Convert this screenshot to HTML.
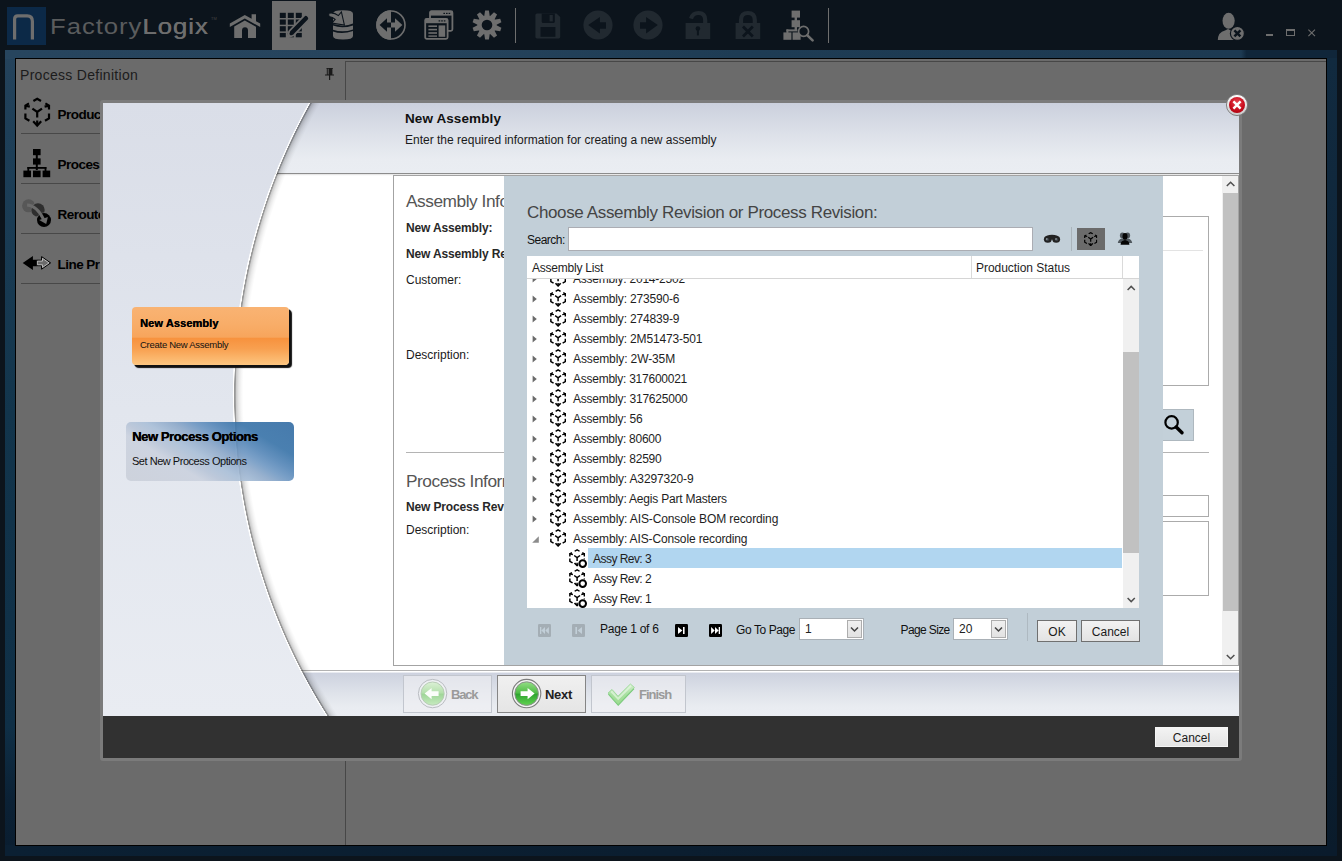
<!DOCTYPE html>
<html>
<head>
<meta charset="utf-8">
<title>FactoryLogix</title>
<style>
*{box-sizing:border-box;margin:0;padding:0}
html,body{width:1342px;height:861px;overflow:hidden;background:#0c141c;font-family:"Liberation Sans",sans-serif;font-size:12px;color:#222}
.abs{position:absolute}
#app{position:absolute;left:0;top:0;width:1342px;height:861px;background:#0c141c;overflow:hidden}
#band{left:5px;top:50px;width:1332px;height:806px;background:linear-gradient(180deg,#25435c 0%,#1e3f58 10%,#12354c 45%,#0f2f46 84%,#0b2135 93%,#0a1d2f 100%)}
#main{left:15px;top:58px;width:1312px;height:788px;background:#6b6b6b;border:1px solid #000}
#vdiv{left:345px;top:61px;width:981px;height:784px;border-left:1px solid #474747;border-top:1px solid #474747}
.pitem{position:absolute;left:21px;width:90px;height:50px;border-bottom:1px solid #484848;font-weight:700;font-size:13.5px;color:#000;white-space:nowrap;overflow:hidden}
.pitem span{position:absolute;left:36.6px;top:23px;line-height:16px;letter-spacing:-0.55px}
.pitem svg{position:absolute;left:1px}
/* dialog */
#dlgshadow{left:100px;top:100px;width:1142px;height:661px;background:#7b7b7b;border-radius:3px}
#dlg{left:103px;top:103px;width:1136px;height:655px;background:#fff;overflow:hidden}
#dlgfoot{left:0;top:613px;width:1136px;height:42px;background:#313131}
.btn{position:absolute;border:1px solid #707070;background:linear-gradient(180deg,#f2f2f2,#e3e3e3);text-align:center;color:#1a1a1a;font-size:12px}
.row{position:absolute;white-space:nowrap;font-size:12px;line-height:16px;color:#1e1e1e;letter-spacing:-0.22px}
</style>
</head>
<body>
<div id="app">
<!--TOPBAR-->
<div class="abs" style="left:7px;top:7px;width:39px;height:38px;background:#0c2947"></div>
<svg class="abs" style="left:7px;top:7px" width="39" height="38" viewBox="0 0 39 38"><path d="M7.6 32.4 V12 Q7.6 8.8 10.8 8.8 H20.2 Q25.4 8.8 25.4 14.2 V32.4" fill="none" stroke="#6e6e6e" stroke-width="3.2"/></svg>
<div class="abs" style="left:50px;top:12px;font-size:21.4px;line-height:30px;color:#6e6e6e;white-space:nowrap;transform-origin:0 0;transform:scaleX(1.2);letter-spacing:0.8px"><span style="opacity:.8">Factory</span><span style="text-shadow:0.4px 0 0 #6e6e6e">Logix</span></div>
<div class="abs" style="left:211px;top:16px;font-size:4px;color:#444;letter-spacing:0">TM</div>
<!-- home -->
<svg class="abs" style="left:228px;top:10px" width="36" height="32" viewBox="0 0 36 32"><g fill="#6e6e6e"><path d="M1.8 13.4 L16.8 5 L23.6 8.8 V4.2 H28 V11.2 L32.2 13.6 V17 L16.8 8.6 L1.8 17 Z"/><path d="M6.2 16.6 L16.8 10.6 L28 16.8 V27.9 H20 V20.6 Q20 17.2 17 17.2 Q14 17.2 14 20.6 V27.9 H6.2 Z"/></g></svg>
<!-- selected tab -->
<div class="abs" style="left:272px;top:1px;width:44px;height:49px;background:#6d6d6d"></div>
<svg class="abs" style="left:272px;top:1px" width="44" height="49" viewBox="0 0 44 49"><g fill="#0c141c">
<rect x="7.8" y="11.8" width="6" height="5.2"/><rect x="15.8" y="11.8" width="6" height="5.2"/><rect x="23.8" y="11.8" width="6" height="5.2"/>
<rect x="7.8" y="18.5" width="6" height="5.2"/><rect x="15.8" y="18.5" width="6" height="5.2"/><rect x="23.8" y="18.5" width="6" height="5.2"/>
<rect x="7.8" y="25.2" width="6" height="5.2"/><rect x="15.8" y="25.2" width="6" height="5.2"/><rect x="23.8" y="25.2" width="6" height="5.2"/>
<rect x="7.8" y="31.9" width="6" height="4.4"/><rect x="15.8" y="31.9" width="6" height="4.4"/><rect x="23.8" y="31.9" width="6" height="4.4"/></g>
<path d="M32 14.8 Q33.8 13 36 15.2 Q38.2 17.4 36.4 19.2 L21.8 34.2 L15.4 36.6 L17.4 30 Z" fill="#0c141c" stroke="#6d6d6d" stroke-width="1.7"/><path d="M15.6 36.4 L17 32.8 L19.2 35 Z" fill="#6d6d6d"/></svg>
<!-- db -->
<svg class="abs" style="left:326px;top:8px" width="30" height="34" viewBox="0 0 30 34"><g fill="#6e6e6e"><path d="M7 5.6 Q7 2.2 17 2.2 Q27 2.2 27 5.6 V15.6 Q22 18 15 17.6 L7 16 Z"/><path d="M7 17.6 Q16 21 27 17.4 V21.4 Q17 25 7 21.8 Z"/><path d="M7 23.4 Q16 26.6 27 23 V28 Q27 31.6 17 31.6 Q7 31.6 7 28 Z"/><path d="M2.6 5.2 Q8 4 12.4 7.6 L15.4 4 L18.4 17 L5.8 15 L9.2 11.4 Q6.6 9 3 8.6 Z" stroke="#0c141c" stroke-width="1.1"/></g></svg>
<!-- circle arrows -->
<svg class="abs" style="left:375px;top:9px" width="32" height="32" viewBox="0 0 32 32"><circle cx="16" cy="16" r="14" fill="#0c141c" stroke="#6e6e6e" stroke-width="1.6"/><path d="M16 1.2 A14.8 14.8 0 0 0 16 30.8 Z" fill="#6e6e6e"/><path d="M4.6 16 L12 9.2 V13.4 H16 V18.6 H12 V22.8 Z" fill="#0c141c"/><path d="M27.4 16 L20 9.2 V13.4 H16 V18.6 H20 V22.8 Z" fill="#6e6e6e"/></svg>
<!-- windows -->
<svg class="abs" style="left:423px;top:9px" width="32" height="32" viewBox="0 0 32 32"><g fill="none" stroke="#6e6e6e" stroke-width="1.8"><rect x="7" y="2.2" width="22.4" height="19.6" rx="1.5"/><rect x="2.2" y="9.8" width="22.4" height="20" rx="1.5" fill="#0c141c"/></g><g fill="#6e6e6e"><rect x="7" y="2.2" width="22.4" height="4.4"/><rect x="2.2" y="9.8" width="22.4" height="4.4"/><rect x="5.4" y="16.4" width="8.6" height="1.6"/><rect x="5.4" y="19.8" width="8.6" height="1.6"/><rect x="5.4" y="23.2" width="8.6" height="1.6"/><rect x="5.4" y="26.4" width="8.6" height="1.4"/><rect x="15.6" y="16.4" width="6.6" height="11.4"/></g><g fill="#0c141c"><rect x="15.6" y="11.3" width="1.6" height="1.2"/><rect x="18.2" y="11.3" width="1.6" height="1.2"/><rect x="20.8" y="11.3" width="1.6" height="1.2"/><rect x="20.4" y="3.8" width="1.6" height="1.2"/><rect x="23" y="3.8" width="1.6" height="1.2"/><rect x="25.6" y="3.8" width="1.6" height="1.2"/></g></svg>
<!-- gear -->
<svg class="abs" style="left:471px;top:9px" width="32" height="32" viewBox="-16 -16 32 32"><g fill="#6e6e6e"><circle r="9.6"/><g id="tooth"><path d="M-1.9 -14.5 H1.9 L2.9 -8 H-2.9 Z"/></g><use href="#tooth" transform="rotate(36)"/><use href="#tooth" transform="rotate(72)"/><use href="#tooth" transform="rotate(108)"/><use href="#tooth" transform="rotate(144)"/><use href="#tooth" transform="rotate(180)"/><use href="#tooth" transform="rotate(216)"/><use href="#tooth" transform="rotate(252)"/><use href="#tooth" transform="rotate(288)"/><use href="#tooth" transform="rotate(324)"/></g><circle r="5.3" fill="#0c141c"/></svg>
<div class="abs" style="left:515px;top:8px;width:1.2px;height:35px;background:#6e6e6e"></div>
<!-- save (disabled) -->
<svg class="abs" style="left:534px;top:12px" width="28" height="28" viewBox="0 0 28 28"><path d="M1.4 3 Q1.4 1.4 3 1.4 H22.5 L26.2 5 V25 Q26.2 26.4 24.8 26.4 H3 Q1.4 26.4 1.4 25 Z" fill="#212930"/><rect x="6.5" y="15" width="14.9" height="9.8" fill="#0c141c"/><path d="M7.7 1.4 H20.8 V9.4 Q20.8 10.9 19.3 10.9 H9.2 Q7.7 10.9 7.7 9.4 Z" fill="#0c141c"/><rect x="15.6" y="3" width="3.2" height="6.4" fill="#212930"/></svg>
<!-- back/forward disabled -->
<svg class="abs" style="left:583px;top:10px" width="30" height="30" viewBox="0 0 30 30"><circle cx="15" cy="15" r="14.6" fill="#212930"/><path d="M5.2 15 L16.9 6.9 V12.3 H23 V18.8 H16.9 V23.4 Z" fill="#0c141c"/></svg>
<svg class="abs" style="left:633px;top:10px" width="30" height="30" viewBox="0 0 30 30"><circle cx="15" cy="15" r="14.6" fill="#212930"/><path d="M24.8 15 L13.1 6.9 V12.3 H7 V18.8 H13.1 V23.4 Z" fill="#0c141c"/></svg>
<!-- unlock / lock disabled -->
<svg class="abs" style="left:684px;top:10px" width="28" height="30" viewBox="0 0 28 30"><path d="M7 8.6 Q8.6 3 14.4 3 Q21.2 3 21.2 10 V15" fill="none" stroke="#212930" stroke-width="4.2"/><rect x="1.6" y="13" width="24.6" height="16" fill="#212930"/><circle cx="13.9" cy="18.6" r="2.3" fill="#0c141c"/><rect x="12.9" y="19.4" width="2" height="6" fill="#0c141c"/></svg>
<svg class="abs" style="left:734px;top:10px" width="28" height="30" viewBox="0 0 28 30"><path d="M7 15 V10 Q7 3 13.9 3 Q20.8 3 20.8 10 V15" fill="none" stroke="#212930" stroke-width="4.2"/><rect x="1.6" y="13" width="24.6" height="16" fill="#212930"/><path d="M9 16.6 L18.8 26.4 M18.8 16.6 L9 26.4" stroke="#0c141c" stroke-width="2.8"/></svg>
<!-- tree-search -->
<svg class="abs" style="left:782px;top:9px" width="34" height="34" viewBox="0 0 34 34"><g fill="#6e6e6e"><rect x="9.6" y="1.6" width="8.4" height="7"/><rect x="12.6" y="8" width="2.4" height="4"/><rect x="9.6" y="11.2" width="8.4" height="7"/><rect x="12.6" y="18" width="2.4" height="4"/><rect x="4.4" y="20.4" width="11" height="2"/><rect x="4.4" y="20.4" width="2" height="4"/><rect x="1.4" y="23.4" width="8" height="7.4"/><rect x="10.6" y="23.4" width="8" height="7.4"/></g><circle cx="21.6" cy="22.4" r="5" fill="#0c141c" stroke="#6e6e6e" stroke-width="1.7"/><path d="M25.4 26.4 L30.6 31.4" stroke="#6e6e6e" stroke-width="2.6" stroke-linecap="round"/></svg>
<div class="abs" style="left:828px;top:8px;width:1.2px;height:35px;background:#6e6e6e"></div>
<!-- user -->
<svg class="abs" style="left:1216px;top:11px" width="32" height="32" viewBox="0 0 32 32"><g fill="#6e6e6e"><ellipse cx="12.6" cy="9.8" rx="6.1" ry="8"/><path d="M1.8 29 Q2 21 9 19.4 L12 18 L15 19.4 Q19 20.4 20 23 L18 29 Z"/></g><circle cx="21.4" cy="22.4" r="7" fill="#6e6e6e" stroke="#0c141c" stroke-width="1.2"/><path d="M18.4 19.4 L24.4 25.4 M24.4 19.4 L18.4 25.4" stroke="#0c141c" stroke-width="2.5"/></svg>
<div class="abs" style="left:1266px;top:34px;width:7px;height:2px;background:#6e6e6e"></div>
<div class="abs" style="left:1286px;top:29px;width:9px;height:7px;border:1px solid #6e6e6e;border-top-width:2px"></div>
<svg class="abs" style="left:1307px;top:28px" width="10" height="10" viewBox="0 0 10 10"><path d="M1.4 1.6 L8 8.2 M8 1.6 L1.4 8.2" stroke="#6e6e6e" stroke-width="1.1"/></svg>
<!--/TOPBAR-->
<div id="band" class="abs"></div>
<div class="abs" style="left:5px;top:50px;width:1332px;height:9px;background:linear-gradient(90deg,#27455e 0%,#26445d 30%,#1e3c54 55%,#1d3a52 92.8%,#10263a 93.2%,#10263a 100%)"></div>
<div class="abs" style="left:1326px;top:58px;width:11px;height:798px;background:linear-gradient(180deg,#112a3f 0%,#0e2438 50%,#0a1b2b 100%)"></div>
<div class="abs" style="left:5px;top:845px;width:1332px;height:11px;background:linear-gradient(90deg,#0b2033 0%,#0b1e30 50%,#0a1b2c 100%)"></div>
<div id="main" class="abs"></div>
<div id="vdiv" class="abs"></div>
<!--LEFTPANEL-->
<div class="abs" style="left:20px;top:66px;font-size:14px;line-height:18px;color:#1c1c1c;letter-spacing:0.29px;white-space:nowrap">Process Definition</div>
<svg class="abs" style="left:324px;top:67px" width="11" height="14" viewBox="0 0 11 14"><path d="M2.4 1 H9 V1.8 H8.4 V7.4 H10 V8.6 H6.2 V13 H5 V8.6 H1 V7.4 H2.8 V1.8 H2.4 Z" fill="#1a1a1a"/><rect x="3.6" y="1.8" width="1.4" height="5.6" fill="#4a4a4a"/></svg>
<div class="pitem" style="top:84px"><svg width="29" height="32" viewBox="0 0 29 32" style="top:13px;left:1.5px"><g fill="none" stroke="#000" stroke-width="2.2"><path d="M10.4 4 L14.2 1.8 L18 4"/><path d="M22.4 6.4 L26 8.6 V12.6 M26 8.6 L21.6 9.6"/><path d="M6 6.4 L2.4 8.6 V12.6 M2.4 8.6 L6.8 9.6"/><path d="M26 16.4 V21.4 L22 23.8"/><path d="M2.4 16.4 V21.4 L6.4 23.8"/><path d="M9.4 11.6 L14.2 15 L19 11.6 M14.2 15 V20.4 M14.2 23.4 V28"/></g><path d="M9.4 25 L14.2 30.2 L19 25 L17.4 23.6 L14.2 27 L11 23.6 Z" fill="#000"/></svg><span>Product</span></div>
<div class="pitem" style="top:134px"><svg width="29" height="30" viewBox="0 0 29 30" style="top:14px;left:2px"><g fill="#000"><rect x="10" y="1" width="7.6" height="6.2"/><rect x="12.8" y="7" width="2" height="4"/><rect x="10" y="10.4" width="7.6" height="6.2"/><rect x="12.8" y="16" width="2" height="6"/><rect x="4.4" y="19" width="19" height="1.8"/><rect x="4.4" y="19" width="1.8" height="4"/><rect x="21.6" y="19" width="1.8" height="4"/><rect x="0.4" y="22.6" width="7.6" height="6.6"/><rect x="10" y="22.6" width="7.6" height="6.6"/><rect x="19.6" y="22.6" width="7.6" height="6.6"/></g></svg><span>Process</span></div>
<div class="pitem" style="top:184px"><svg width="32" height="32" viewBox="0 0 32 32" style="top:13px;left:1px"><circle cx="6.6" cy="8.8" r="6.5" fill="#575757"/><circle cx="16" cy="12.9" r="7.3" fill="#6b6b6b"/><circle cx="16" cy="12.9" r="6.7" fill="#2e2e2e"/><circle cx="22" cy="23.1" r="7.6" fill="#6b6b6b"/><circle cx="22" cy="23.1" r="7" fill="#000"/><path d="M5.1 8.1 Q15 8.6 21.7 22.7" fill="none" stroke="#6b6b6b" stroke-width="3"/><path d="M17.2 22.9 L24.2 26.9 L25.9 20.1 Z" fill="#6b6b6b"/></svg><span>Reroute</span></div>
<div class="pitem" style="top:234px"><svg width="32" height="18" viewBox="0 0 32 18" style="top:20px;left:1px"><path d="M0.7 8.9 L10.9 1.9 V5.7 H14.8 V12.2 H10.9 V15.9 Z" fill="#000"/><path d="M28.6 8.9 L19.6 2.6 V6.2 H14.8 V11.7 H19.6 V15.2 Z" fill="#6b6b6b" stroke="#000" stroke-width="1"/><path d="M27 8.9 L20.5 4.4 V7.1 H15.4 V10.8 H20.5 V13.4 Z" fill="none" stroke="#d8d8d8" stroke-width=".7"/></svg><span>Line Pr</span></div>
<!--/LEFTPANEL-->
<div id="dlgshadow" class="abs"></div>
<div id="dlg" class="abs">
<!--DLGBODY-->
<div class="abs" style="left:0;top:0;width:1136px;height:613px;background:linear-gradient(180deg,#dadee8 0%,#e2e6ee 50%,#e9ecf2 100%)"></div>
<div id="rp" class="abs" style="left:0;top:0;width:1136px;height:613px;background:#fff;clip-path:circle(599.8px at 729.7px 292px)">
  <div class="abs" style="left:0;top:0;width:1136px;height:70px;background:linear-gradient(180deg,#cbd0dd 0%,#dde1e9 45%,#e9ecf1 80%,#eaedf2 100%)"></div>
  <div class="abs" style="left:0;top:70px;width:1136px;height:3px;background:linear-gradient(180deg,#8c8c8c 0,#8c8c8c 33%,#dcdcdc 34%,#f4f4f4 67%,#fff 100%)"></div>
  <div class="abs" style="left:0;top:567px;width:1136px;height:1px;background:#b2b2b2"></div>
  <div class="abs" style="left:0;top:568px;width:1136px;height:45px;background:linear-gradient(180deg,#fff 0,#fff 2%,#cdd2df 5%,#dfe3ea 50%,#e9ecf1 80%,#eaedf2 100%)"></div>
  <div class="abs" style="left:0;top:0;width:1136px;height:613px;background:radial-gradient(circle at 729.7px 292px,rgba(0,0,0,0) 0,rgba(0,0,0,0) 589.5px,rgba(0,0,0,.03) 591.5px,rgba(0,0,0,.09) 594px,rgba(0,0,0,.2) 596.6px,rgba(0,0,0,.4) 597.4px,rgba(0,0,0,.4) 598.3px,rgba(255,255,255,.95) 598.7px,rgba(255,255,255,.95) 600px)"></div>
</div>
<div class="abs" style="left:302px;top:7px;font-size:13.5px;font-weight:700;color:#111;letter-spacing:0.1px;line-height:18px;white-space:nowrap">New Assembly</div>
<div class="abs" style="left:302px;top:29px;font-size:12px;color:#1a1a1a;line-height:16px;white-space:nowrap">Enter the required information for creating a new assembly</div>
<!-- form box -->
<div id="box" class="abs" style="left:290px;top:72px;width:846px;height:491px;border:1px solid #a3a3a3;background:#fff;overflow:hidden">
<!--BOX-->
<svg width="0" height="0" style="position:absolute"><defs>
<symbol id="asm" viewBox="1 0.4 26.4 30.2" preserveAspectRatio="none"><g fill="none" stroke="#000" stroke-width="2.4"><path d="M10.2 4.2 L14.2 1.8 L18.2 4.2"/><path d="M26 13 V8.6 L21 9.8 M26 8.6 L22.6 6.4"/><path d="M2.4 13 V8.6 L7.4 9.8 M2.4 8.6 L5.8 6.4"/><path d="M26 16.6 V21.4 L21.6 24"/><path d="M2.4 16.6 V21.4 L6.8 24"/><path d="M9.4 11.4 L14.2 15 L19 11.4 M14.2 15 V20.6 M14.2 23.6 V28"/></g><path d="M9 24.8 L14.2 30.4 L19.4 24.8 L17.4 23.2 L14.2 26.8 L11 23.2 Z" fill="#000"/></symbol>
<symbol id="rev" viewBox="0 0 19 20"><svg x="0" y="0" width="16.2" height="17.8" viewBox="1 0.4 26.4 30.2" preserveAspectRatio="none"><g fill="none" stroke="#000" stroke-width="2.4"><path d="M10.2 4.2 L14.2 1.8 L18.2 4.2"/><path d="M26 13 V8.6 L21 9.8 M26 8.6 L22.6 6.4"/><path d="M2.4 13 V8.6 L7.4 9.8 M2.4 8.6 L5.8 6.4"/><path d="M26 16.6 V21.4 L21.6 24"/><path d="M2.4 16.6 V21.4 L6.8 24"/><path d="M9.4 11.4 L14.2 15 L19 11.4 M14.2 15 V20.6 M14.2 23.6 V28"/></g><path d="M9 24.8 L14.2 30.4 L19.4 24.8 L17.4 23.2 L14.2 26.8 L11 23.2 Z" fill="#000"/></svg><circle cx="13.7" cy="14.6" r="4.6" fill="#fff"/><circle cx="13.7" cy="14.6" r="3.3" fill="none" stroke="#000" stroke-width="2"/></symbol>
</defs></svg>
<div style="position:absolute;white-space:nowrap;line-height:16px;left:12px;top:13px;font-size:17.3px;line-height:24px;color:#555;letter-spacing:-0.46px">Assembly Information</div>
<div style="position:absolute;white-space:nowrap;line-height:16px;left:12px;top:44px;font-weight:700;color:#282828;font-size:12px;letter-spacing:-0.15px">New Assembly:</div>
<div style="position:absolute;white-space:nowrap;line-height:16px;left:12px;top:70px;font-weight:700;color:#282828;font-size:12px;letter-spacing:-0.15px">New Assembly Revision:</div>
<div style="position:absolute;white-space:nowrap;line-height:16px;left:12px;top:96px;color:#1a1a1a;font-size:12px">Customer:</div>
<div style="position:absolute;white-space:nowrap;line-height:16px;left:12px;top:171px;color:#1a1a1a;font-size:12px">Description:</div>
<div class="abs" style="left:12px;top:276px;width:803px;height:1px;background:#b4b4b4"></div>
<div style="position:absolute;white-space:nowrap;line-height:16px;left:12px;top:292.5px;font-size:17.3px;line-height:24px;color:#555;letter-spacing:-0.46px">Process Information</div>
<div style="position:absolute;white-space:nowrap;line-height:16px;left:12px;top:323px;font-weight:700;color:#282828;font-size:12px;letter-spacing:-0.15px">New Process Revision:</div>
<div style="position:absolute;white-space:nowrap;line-height:16px;left:12px;top:346px;color:#1a1a1a;font-size:12px">Description:</div>
<div class="abs" style="left:206px;top:40px;width:609px;height:170px;border:1px solid #ababab;background:#fff"></div>
<div class="abs" style="left:206px;top:74px;width:603px;height:1px;background:#e3e3e3"></div>
<div class="abs" style="left:756px;top:233px;width:44px;height:32px;border:1px solid #aeb8bf;background:#c3d0d9"></div>
<svg class="abs" style="left:768px;top:237px" width="24" height="24" viewBox="0 0 24 24"><circle cx="9.6" cy="9.4" r="6.2" fill="none" stroke="#000" stroke-width="2.2"/><path d="M14.2 14 L20 19.8" stroke="#000" stroke-width="3.4" stroke-linecap="round"/></svg>
<div class="abs" style="left:206px;top:319px;width:609px;height:22px;border:1px solid #ababab;background:#fff"></div>
<div class="abs" style="left:206px;top:345px;width:609px;height:75px;border:1px solid #ababab;background:#fff"></div>
<div class="abs" style="left:828px;top:0;width:17px;height:489px;background:#f0f0f0"></div>
<div class="abs" style="left:828.6px;top:17px;width:16.4px;height:418px;background:#c1c1c1"></div>
<svg class="abs" style="left:831px;top:4px" width="11" height="8" viewBox="0 0 11 8"><path d="M1.8 6 L5.6 2.2 L9.4 6" fill="none" stroke="#505050" stroke-width="1.5"/></svg>
<svg class="abs" style="left:831px;top:477px" width="11" height="8" viewBox="0 0 11 8"><path d="M1.8 2 L5.6 5.8 L9.4 2" fill="none" stroke="#505050" stroke-width="1.5"/></svg>
<div id="pop" class="abs" style="left:110px;top:0;width:659px;height:489px;background:#c2cfd8">
<div style="position:absolute;white-space:nowrap;line-height:16px;left:23px;top:25px;font-size:17px;line-height:24px;color:#444;letter-spacing:-0.36px">Choose Assembly Revision or Process Revision:</div>
<div style="position:absolute;white-space:nowrap;line-height:16px;left:23px;top:55.6px;font-size:12px;color:#111;letter-spacing:-0.5px">Search:</div>
<div class="abs" style="left:64px;top:51px;width:465px;height:24px;border:1px solid #abadb3;background:#fff"></div>
<svg class="abs" style="left:539px;top:57px" width="18" height="12" viewBox="0 0 18 12"><g fill="#222"><ellipse cx="4.8" cy="6.2" rx="3.9" ry="3.5"/><ellipse cx="13.2" cy="6.2" rx="3.9" ry="3.5"/><path d="M3.4 3 Q9 0.6 14.6 3 L14 6.4 H4 Z"/></g><ellipse cx="4.4" cy="6.6" rx="1.7" ry="1.5" fill="#3c4247"/><ellipse cx="13.6" cy="6.6" rx="1.7" ry="1.5" fill="#3c4247"/><ellipse cx="3.8" cy="6" rx=".8" ry=".7" fill="#aab4bb"/><ellipse cx="13" cy="6" rx=".8" ry=".7" fill="#aab4bb"/></svg>
<div class="abs" style="left:567px;top:51px;width:1px;height:24px;background:#aab4bb"></div>
<div class="abs" style="left:573px;top:52px;width:28px;height:22px;background:#6b6b6b"></div>
<svg class="abs" style="left:580.2px;top:55.6px" width="13.4" height="14.6"><use href="#asm"/></svg>
<svg class="abs" style="left:613px;top:55px" width="16" height="15" viewBox="0 0 16 15"><g fill="#4f575d"><ellipse cx="5.4" cy="4.4" rx="2.5" ry="2.9"/><ellipse cx="10.6" cy="4.4" rx="2.5" ry="2.9"/><path d="M0.8 12 Q1.4 8.2 5 7.6 L11 7.6 Q14.6 8.2 15.2 12 Z"/></g><g fill="#050505"><ellipse cx="8" cy="5.4" rx="2.5" ry="3.3"/><path d="M3.6 13.8 Q3.8 10.2 6.6 9.6 L8 9 L9.4 9.6 Q12.2 10.2 12.4 13.8 Z"/></g></svg>
<div id="list" class="abs" style="left:23px;top:80px;width:612px;height:352px;background:#fff;overflow:hidden">
<svg class="abs" style="left:5.399999999999977px;top:18.799999999999955px" width="6" height="8" viewBox="0 0 6 8"><path d="M0.6 0.4 L4.8 4 L0.6 7.6 Z" fill="#6a6a6a"/></svg>
<svg class="abs" style="left:22.6px;top:13.3px" width="16.2" height="18.2"><use href="#asm"/></svg>
<div class="row" style="left:46px;top:15.4px">Assembly: 2014-2502</div>
<svg class="abs" style="left:5.399999999999977px;top:38.799999999999955px" width="6" height="8" viewBox="0 0 6 8"><path d="M0.6 0.4 L4.8 4 L0.6 7.6 Z" fill="#6a6a6a"/></svg>
<svg class="abs" style="left:22.6px;top:33.3px" width="16.2" height="18.2"><use href="#asm"/></svg>
<div class="row" style="left:46px;top:35.4px;letter-spacing:-0.17px">Assembly: 273590-6</div>
<svg class="abs" style="left:5.399999999999977px;top:58.799999999999955px" width="6" height="8" viewBox="0 0 6 8"><path d="M0.6 0.4 L4.8 4 L0.6 7.6 Z" fill="#6a6a6a"/></svg>
<svg class="abs" style="left:22.6px;top:53.3px" width="16.2" height="18.2"><use href="#asm"/></svg>
<div class="row" style="left:46px;top:55.4px;letter-spacing:-0.17px">Assembly: 274839-9</div>
<svg class="abs" style="left:5.399999999999977px;top:78.79999999999995px" width="6" height="8" viewBox="0 0 6 8"><path d="M0.6 0.4 L4.8 4 L0.6 7.6 Z" fill="#6a6a6a"/></svg>
<svg class="abs" style="left:22.6px;top:73.3px" width="16.2" height="18.2"><use href="#asm"/></svg>
<div class="row" style="left:46px;top:75.4px;letter-spacing:-0.16px">Assembly: 2M51473-501</div>
<svg class="abs" style="left:5.399999999999977px;top:98.79999999999995px" width="6" height="8" viewBox="0 0 6 8"><path d="M0.6 0.4 L4.8 4 L0.6 7.6 Z" fill="#6a6a6a"/></svg>
<svg class="abs" style="left:22.6px;top:93.3px" width="16.2" height="18.2"><use href="#asm"/></svg>
<div class="row" style="left:46px;top:95.4px;letter-spacing:-0.11px">Assembly: 2W-35M</div>
<svg class="abs" style="left:5.399999999999977px;top:118.79999999999995px" width="6" height="8" viewBox="0 0 6 8"><path d="M0.6 0.4 L4.8 4 L0.6 7.6 Z" fill="#6a6a6a"/></svg>
<svg class="abs" style="left:22.6px;top:113.3px" width="16.2" height="18.2"><use href="#asm"/></svg>
<div class="row" style="left:46px;top:115.4px;letter-spacing:-0.25px">Assembly: 317600021</div>
<svg class="abs" style="left:5.399999999999977px;top:138.79999999999995px" width="6" height="8" viewBox="0 0 6 8"><path d="M0.6 0.4 L4.8 4 L0.6 7.6 Z" fill="#6a6a6a"/></svg>
<svg class="abs" style="left:22.6px;top:133.3px" width="16.2" height="18.2"><use href="#asm"/></svg>
<div class="row" style="left:46px;top:135.4px">Assembly: 317625000</div>
<svg class="abs" style="left:5.399999999999977px;top:158.79999999999995px" width="6" height="8" viewBox="0 0 6 8"><path d="M0.6 0.4 L4.8 4 L0.6 7.6 Z" fill="#6a6a6a"/></svg>
<svg class="abs" style="left:22.6px;top:153.3px" width="16.2" height="18.2"><use href="#asm"/></svg>
<div class="row" style="left:46px;top:155.4px">Assembly: 56</div>
<svg class="abs" style="left:5.399999999999977px;top:178.79999999999995px" width="6" height="8" viewBox="0 0 6 8"><path d="M0.6 0.4 L4.8 4 L0.6 7.6 Z" fill="#6a6a6a"/></svg>
<svg class="abs" style="left:22.6px;top:173.3px" width="16.2" height="18.2"><use href="#asm"/></svg>
<div class="row" style="left:46px;top:175.4px;letter-spacing:-0.26px">Assembly: 80600</div>
<svg class="abs" style="left:5.399999999999977px;top:198.79999999999995px" width="6" height="8" viewBox="0 0 6 8"><path d="M0.6 0.4 L4.8 4 L0.6 7.6 Z" fill="#6a6a6a"/></svg>
<svg class="abs" style="left:22.6px;top:193.3px" width="16.2" height="18.2"><use href="#asm"/></svg>
<div class="row" style="left:46px;top:195.4px;letter-spacing:-0.24px">Assembly: 82590</div>
<svg class="abs" style="left:5.399999999999977px;top:218.79999999999995px" width="6" height="8" viewBox="0 0 6 8"><path d="M0.6 0.4 L4.8 4 L0.6 7.6 Z" fill="#6a6a6a"/></svg>
<svg class="abs" style="left:22.6px;top:213.3px" width="16.2" height="18.2"><use href="#asm"/></svg>
<div class="row" style="left:46px;top:215.4px;letter-spacing:-0.15px">Assembly: A3297320-9</div>
<svg class="abs" style="left:5.399999999999977px;top:238.79999999999995px" width="6" height="8" viewBox="0 0 6 8"><path d="M0.6 0.4 L4.8 4 L0.6 7.6 Z" fill="#6a6a6a"/></svg>
<svg class="abs" style="left:22.6px;top:233.3px" width="16.2" height="18.2"><use href="#asm"/></svg>
<div class="row" style="left:46px;top:235.4px;letter-spacing:-0.2px">Assembly: Aegis Part Masters</div>
<svg class="abs" style="left:5.399999999999977px;top:258.79999999999995px" width="6" height="8" viewBox="0 0 6 8"><path d="M0.6 0.4 L4.8 4 L0.6 7.6 Z" fill="#6a6a6a"/></svg>
<svg class="abs" style="left:22.6px;top:253.3px" width="16.2" height="18.2"><use href="#asm"/></svg>
<div class="row" style="left:46px;top:255.4px;letter-spacing:-0.12px">Assembly: AIS-Console BOM recording</div>
<svg class="abs" style="left:4.5px;top:279.79999999999995px" width="8" height="8" viewBox="0 0 8 8"><path d="M6.8 0.2 V6.8 H0.2 Z" fill="#8c8c8c"/></svg>
<svg class="abs" style="left:22.6px;top:273.3px" width="16.2" height="18.2"><use href="#asm"/></svg>
<div class="row" style="left:46px;top:275.4px;letter-spacing:-0.14px">Assembly: AIS-Console recording</div>
<div class="abs" style="left:61px;top:292.4px;width:534px;height:19.6px;background:#b1d6f0"></div>
<svg class="abs" style="left:42.4px;top:292.8px" width="19" height="20"><use href="#rev"/></svg>
<div class="row" style="left:66px;top:295.4px;letter-spacing:-0.54px">Assy Rev: 3</div>
<svg class="abs" style="left:42.4px;top:312.8px" width="19" height="20"><use href="#rev"/></svg>
<div class="row" style="left:66px;top:315.4px;letter-spacing:-0.54px">Assy Rev: 2</div>
<svg class="abs" style="left:42.4px;top:332.8px" width="19" height="20"><use href="#rev"/></svg>
<div class="row" style="left:66px;top:335.4px;letter-spacing:-0.54px">Assy Rev: 1</div>
<div class="abs" style="left:0;top:0;width:612px;height:23px;background:#fff;border-bottom:1px solid #d5d5d5"></div>
<div class="abs" style="left:444px;top:0;width:1px;height:22px;background:#dadada"></div>
<div class="abs" style="left:595px;top:0;width:1px;height:22px;background:#dadada"></div>
<div class="row" style="left:5px;top:4px;letter-spacing:-0.23px">Assembly List</div>
<div class="row" style="left:449px;top:4px;letter-spacing:-0.04px">Production Status</div>
<div class="abs" style="left:596px;top:23px;width:16px;height:329px;background:#f0f0f0"></div>
<div class="abs" style="left:596px;top:96px;width:16px;height:201px;background:#c1c1c1"></div>
<svg class="abs" style="left:599px;top:28px" width="11" height="8" viewBox="0 0 11 8"><path d="M1.6 6 L5.2 2.4 L8.8 6" fill="none" stroke="#505050" stroke-width="1.5"/></svg>
<svg class="abs" style="left:599px;top:340px" width="11" height="8" viewBox="0 0 11 8"><path d="M1.6 2 L5.2 5.6 L8.8 2" fill="none" stroke="#505050" stroke-width="1.5"/></svg>
</div>
<svg class="abs" style="left:33.5px;top:447.5px" width="13" height="13" viewBox="0 0 13 13"><rect x="0" y="0" width="13" height="13" rx="1.2" fill="#a4aeb5"/><path d="M2 3 H3.3 V10 H2 Z M7 3 V10 L3.4 6.5 Z M10.9 3 V10 L7.3 6.5 Z" fill="#c2cfd8"/></svg>
<svg class="abs" style="left:67.5px;top:447.5px" width="13" height="13" viewBox="0 0 13 13"><rect x="0" y="0" width="13" height="13" rx="1.2" fill="#a4aeb5"/><path d="M3.4 3 H5 V10 H3.4 Z M10 3 V10 L5.6 6.5 Z" fill="#c2cfd8"/></svg>
<svg class="abs" style="left:170.5px;top:447.5px" width="13" height="13" viewBox="0 0 13 13"><rect x="0" y="0" width="13" height="13" rx="1.2" fill="#000"/><path d="M9.6 3 H8 V10 H9.6 Z M3 3 V10 L7.4 6.5 Z" fill="#fff"/></svg>
<svg class="abs" style="left:204.5px;top:447.5px" width="13" height="13" viewBox="0 0 13 13"><rect x="0" y="0" width="13" height="13" rx="1.2" fill="#000"/><path d="M11 3 H9.7 V10 H11 Z M6 3 V10 L9.6 6.5 Z M2.1 3 V10 L5.7 6.5 Z" fill="#fff"/></svg>
<div style="position:absolute;white-space:nowrap;line-height:16px;left:96px;top:445px;font-size:12px;color:#111;letter-spacing:-0.24px">Page 1 of 6</div>
<div style="position:absolute;white-space:nowrap;line-height:16px;left:232px;top:446px;font-size:12px;color:#111;letter-spacing:-0.41px">Go To Page</div>
<div style="position:absolute;white-space:nowrap;line-height:16px;left:396.5px;top:446px;font-size:12px;color:#111;letter-spacing:-0.62px">Page Size</div>
<div class="abs" style="left:295px;top:442px;width:65px;height:22px;border:1px solid #a9b0b6;background:#fff"></div><div style="position:absolute;white-space:nowrap;line-height:16px;left:301px;top:445px;font-size:12px;color:#222">1</div><div class="abs" style="left:343px;top:444px;width:15px;height:18px;border:1px solid #adadad;background:linear-gradient(180deg,#f0f0f0,#e2e2e2)"></div><svg class="abs" style="left:346px;top:449.5px" width="9" height="7" viewBox="0 0 9 7"><path d="M1 1.4 L4.5 5 L8 1.4" fill="none" stroke="#444" stroke-width="1.5"/></svg>
<div class="abs" style="left:449px;top:442px;width:55px;height:22px;border:1px solid #a9b0b6;background:#fff"></div><div style="position:absolute;white-space:nowrap;line-height:16px;left:455px;top:445px;font-size:12px;color:#222">20</div><div class="abs" style="left:487px;top:444px;width:15px;height:18px;border:1px solid #adadad;background:linear-gradient(180deg,#f0f0f0,#e2e2e2)"></div><svg class="abs" style="left:490px;top:449.5px" width="9" height="7" viewBox="0 0 9 7"><path d="M1 1.4 L4.5 5 L8 1.4" fill="none" stroke="#444" stroke-width="1.5"/></svg>
<div class="abs" style="left:523px;top:437px;width:1px;height:28px;background:#aeb9c1"></div>
<div class="btn" style="left:533px;top:444px;width:40px;height:22px;line-height:22.5px">OK</div>
<div class="btn" style="left:577px;top:444px;width:59px;height:22px;line-height:22.5px">Cancel</div>
</div>
<!--/BOX-->
</div>
<!-- wizard buttons -->
<div class="abs wb" style="left:300px;top:572px;width:89px;height:38px;border:1px solid #c2c6ce;background:rgba(240,240,243,.6)"></div>
<div class="abs wb" style="left:394px;top:572px;width:89px;height:38px;border:1px solid #858585;background:linear-gradient(180deg,#f0f0f0,#e5e5e5)"></div>
<div class="abs wb" style="left:488px;top:572px;width:95px;height:38px;border:1px solid #c2c6ce;background:rgba(240,240,243,.6)"></div>
<svg class="abs" style="left:314px;top:575px" width="32" height="32" viewBox="0 0 32 32"><defs><linearGradient id="gd" x1="0" y1="0" x2="0" y2="1"><stop offset="0" stop-color="#dcf1d6"/><stop offset=".48" stop-color="#b3dfab"/><stop offset=".52" stop-color="#9fd698"/><stop offset="1" stop-color="#c6eabf"/></linearGradient><linearGradient id="gn" x1="0" y1="0" x2="0" y2="1"><stop offset="0" stop-color="#93de86"/><stop offset=".48" stop-color="#4fbb45"/><stop offset=".52" stop-color="#2ea42f"/><stop offset="1" stop-color="#62d352"/></linearGradient></defs><circle cx="15.6" cy="15.6" r="14.2" fill="#eef0f3" stroke="#b9bcc1" stroke-width="1"/><circle cx="15.6" cy="15.6" r="11.6" fill="url(#gd)" stroke="#b4c8b2" stroke-width=".9"/><path d="M7.6 15.6 L14.6 10 V13.2 H21.6 V18 H14.6 V21.2 Z" fill="#fbfdfa"/></svg>
<svg class="abs" style="left:408px;top:575px" width="32" height="32" viewBox="0 0 32 32"><circle cx="15.6" cy="15.6" r="14.2" fill="#f4f4f4" stroke="#7d7d7d" stroke-width="1.1"/><circle cx="15.6" cy="15.6" r="11.8" fill="url(#gn)" stroke="#8b908b" stroke-width="1"/><path d="M23.6 15.6 L16.6 10 V13.2 H9.6 V18 H16.6 V21.2 Z" fill="#fff"/></svg>
<svg class="abs" style="left:503px;top:578px" width="30" height="26" viewBox="0 0 30 26"><defs><linearGradient id="gc" x1="0" y1="0" x2="0" y2="1"><stop offset="0" stop-color="#d3efcc"/><stop offset=".5" stop-color="#a9e0a2"/><stop offset="1" stop-color="#9cdc8f"/></linearGradient></defs><path d="M2 13.6 L6 10 L12 16.8 L24.4 4.6 L28.4 8 L12.2 25 Z" fill="#76c878"/><path d="M2 12 L6 8.4 L12 15.2 L24.4 3 L28.4 6.4 L12.2 23.4 Z" fill="url(#gc)" stroke="#8fd48d" stroke-width=".7"/><path d="M6 9.4 L12 16.2 L24.4 4 L25.8 5.2 L12.2 19.2 L4.4 11 Z" fill="#e6f6e2" opacity=".7"/></svg>
<div class="abs" style="left:348px;top:584px;font-size:13px;font-weight:700;color:#9a9a9a;letter-spacing:-1.2px;line-height:16px">Back</div>
<div class="abs" style="left:442px;top:584px;font-size:13px;font-weight:700;color:#222;letter-spacing:-0.3px;line-height:16px">Next</div>
<div class="abs" style="left:536px;top:584px;font-size:13px;font-weight:700;color:#9a9a9a;letter-spacing:-1px;line-height:16px">Finish</div>
<!-- steps -->
<div class="abs" style="left:29px;top:204px;width:157px;height:58px;border-radius:4px;background:linear-gradient(180deg,#f9b373 0%,#f8ad68 30%,#f7a55c 52%,#f7923e 54%,#f8a050 72%,#fdc680 100%);box-shadow:3px 3px 1px #111,2px 2px 0 #222"></div>
<div class="abs" style="left:37px;top:213px;font-size:11px;font-weight:700;color:#000;line-height:14px;letter-spacing:0.1px;text-shadow:0.3px 0 0 #000;white-space:nowrap">New Assembly</div>
<div class="abs" style="left:37px;top:236px;font-size:9.5px;color:#111;line-height:12px;letter-spacing:-0.27px;white-space:nowrap">Create New Assembly</div>
<div class="abs" style="left:23px;top:319px;width:168px;height:59px;border-radius:5px;background:linear-gradient(31deg,rgba(202,207,217,0.88) 0%,rgba(202,209,222,0.88) 29%,rgba(183,196,215,0.88) 36%,rgba(168,190,215,0.88) 44%,rgba(139,167,200,0.88) 54%,rgba(104,147,192,0.88) 62%,rgba(79,130,181,0.88) 69%,rgba(49,110,165,0.88) 79%,rgba(45,104,161,0.88) 100%)"></div>
<div class="abs" style="left:29px;top:326px;font-size:13px;font-weight:700;color:#000;line-height:16px;letter-spacing:-0.42px;text-shadow:0.4px 0 0 #000;white-space:nowrap">New Process Options</div>
<div class="abs" style="left:29px;top:351px;font-size:11px;color:#111;line-height:14px;letter-spacing:-0.47px;white-space:nowrap">Set New Process Options</div>
<!--/DLGBODY-->
<div id="dlgfoot" class="abs"><div class="btn" style="left:1052px;top:11px;width:73px;height:20px;line-height:20px;border-color:#f5f5f5;background:linear-gradient(180deg,#f3f3f3,#e4e4e4)">Cancel</div></div>
</div>
<svg class="abs" style="left:1225px;top:93px" width="24" height="24" viewBox="0 0 24 24"><defs><radialGradient id="gr" cx="50%" cy="35%" r="70%"><stop offset="0" stop-color="#e84a55"/><stop offset=".6" stop-color="#cc1020"/><stop offset="1" stop-color="#a8000f"/></radialGradient><linearGradient id="gs" x1="0" y1="0" x2="0" y2="1"><stop offset="0" stop-color="#fff"/><stop offset="1" stop-color="#c8c8c8"/></linearGradient></defs><circle cx="12" cy="12" r="10.6" fill="url(#gs)" stroke="#777" stroke-width=".9"/><circle cx="12" cy="12" r="8" fill="url(#gr)"/><path d="M8.4 8.4 L15.6 15.6 M15.6 8.4 L8.4 15.6" stroke="#fff" stroke-width="2.4"/></svg>
</div>
</body>
</html>
